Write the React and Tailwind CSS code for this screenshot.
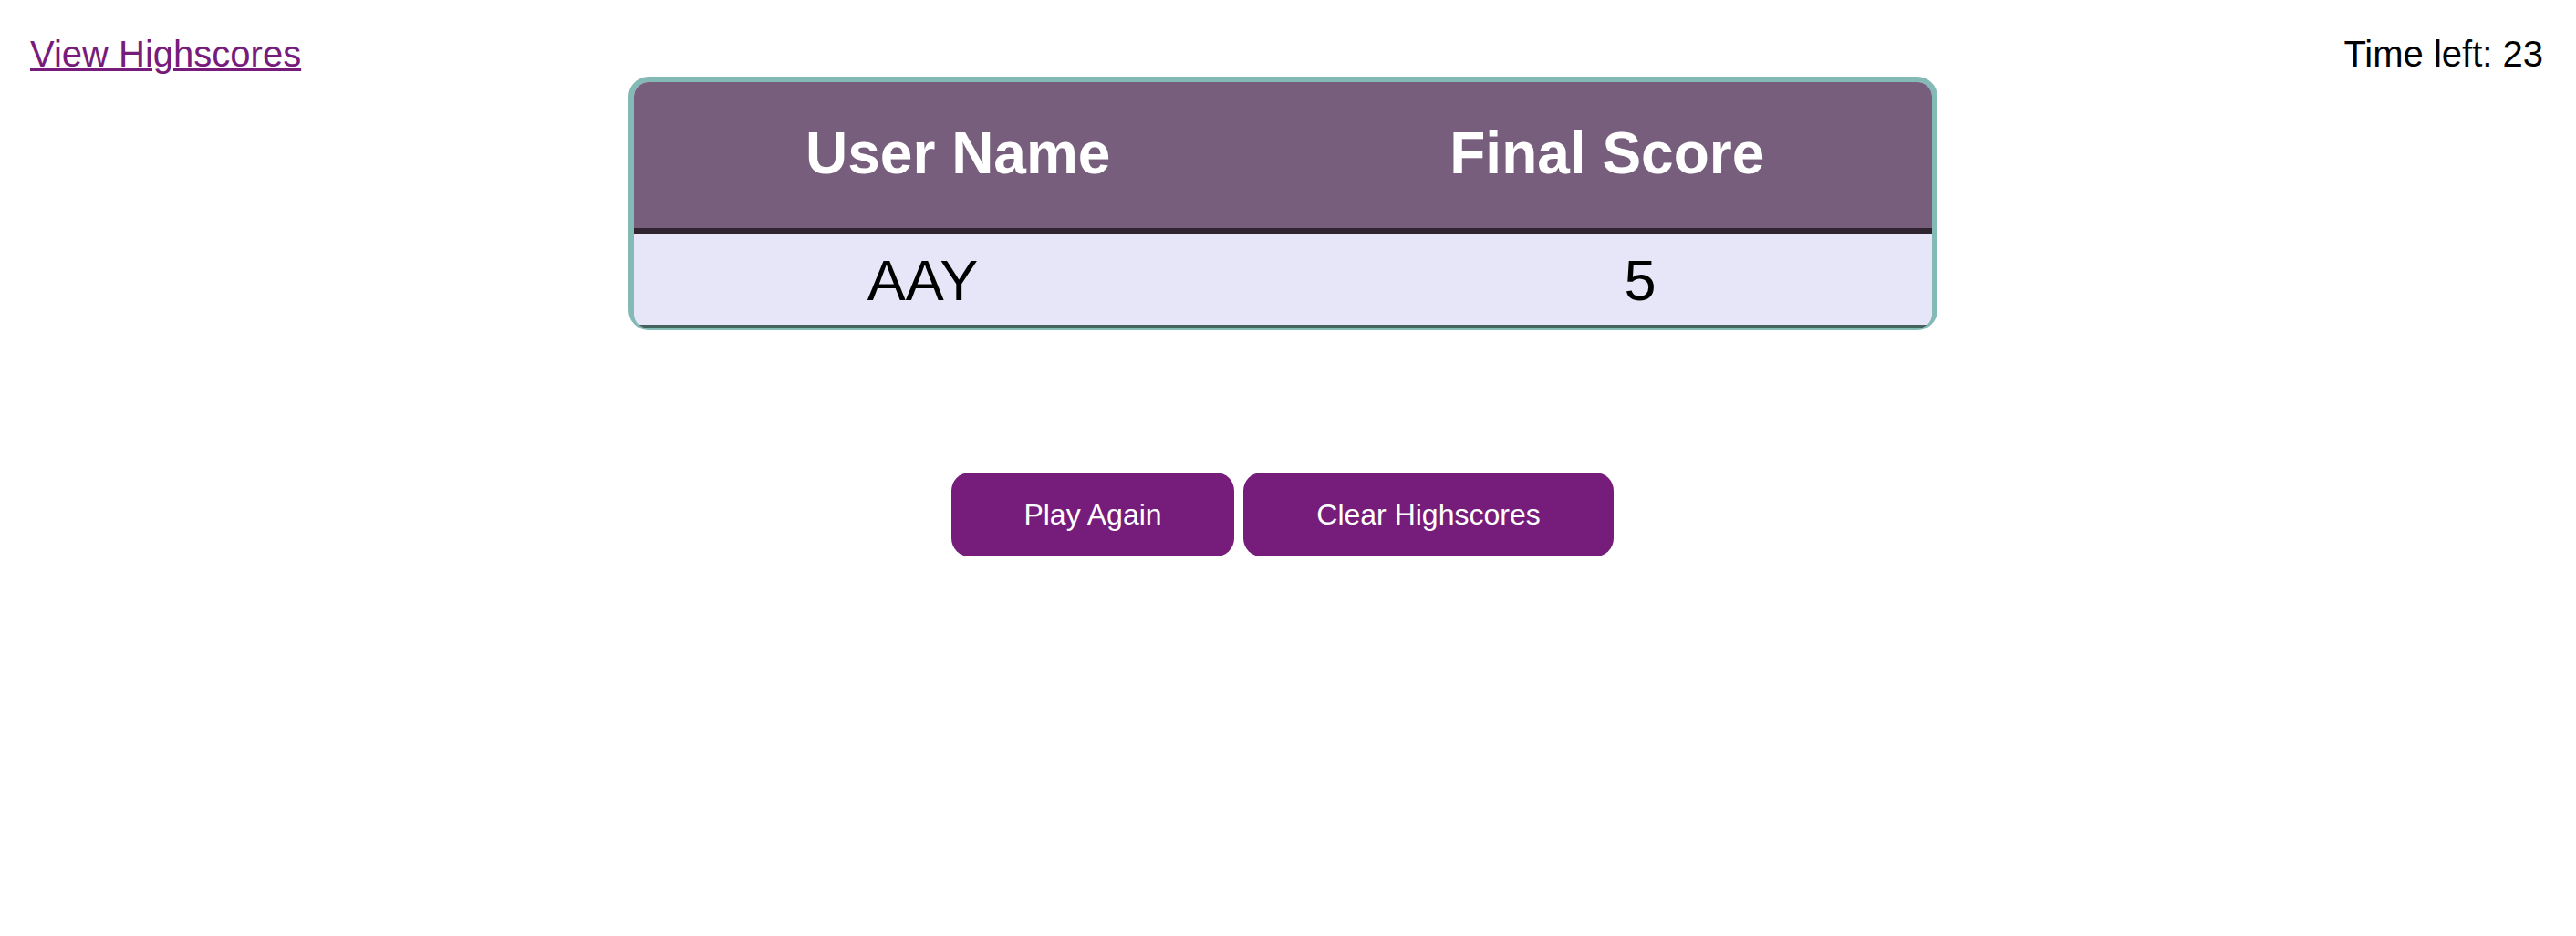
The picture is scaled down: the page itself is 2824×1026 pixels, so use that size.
const App = () => {
    const scores = [{ name: "AAY", score: 5 }];

    return (
        <main className="min-h-screen bg-white font-['Liberation_Sans',Arial,sans-serif] text-black">
            <div className="flex justify-between items-start pl-[33px] pr-[36px] pt-[36px] h-[84px]">
                <a href="#" className="text-[40px] leading-[46px] text-[#771c7b] underline underline-offset-[2px] decoration-[3px]">
                    View Highscores
                </a>
                <div className="text-[40px] leading-[46px]">Time left: 23</div>
            </div>

            <div className="flex justify-center pr-[12px]">
                <div className="w-[1435px] rounded-[22px] border-[6px] border-b-2 border-[#84bab5]">
                    <div className="rounded-[16px] overflow-hidden">
                        <div className="grid grid-cols-2 h-[160px] bg-[#765e7c] text-white font-bold text-[64px] pb-[5px]">
                            <div className="flex items-center justify-center">User Name</div>
                            <div className="flex items-center justify-center">Final Score</div>
                        </div>
                        <div className="h-[6px] bg-[#2f2430]" />
                        {scores.map(s => (
                            <div key={s.name} className="grid grid-cols-[634px_1fr] h-[104px] bg-[#e6e6f8] border-b-4 border-[#44625e] text-[63px] pt-[2px]">
                                <div className="flex items-center justify-center">{s.name}</div>
                                <div className="flex items-center justify-center pl-[150px]">{s.score}</div>
                            </div>
                        ))}
                    </div>
                </div>
            </div>

            <div className="flex justify-center gap-[10px] pr-[12px] mt-[156px]">
                <button className="w-[310px] h-[92px] rounded-[20px] bg-[#761c7a] text-white text-[32px]">
                    Play Again
                </button>
                <button className="w-[406px] h-[92px] rounded-[20px] bg-[#761c7a] text-white text-[32px]">
                    Clear Highscores
                </button>
            </div>
        </main>
    );
};

export default App;
